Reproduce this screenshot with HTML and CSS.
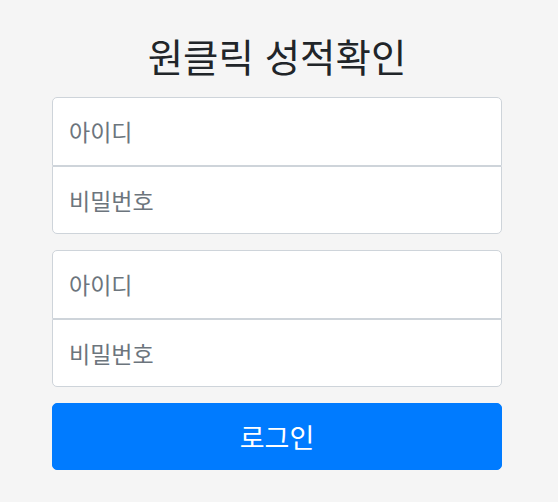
FILE: index.html
```html
<!DOCTYPE html>
<html lang="ko">
<head>
<meta charset="utf-8">
<title>원클릭 성적확인</title>
<link rel="stylesheet" href="styles.css">
</head>
<body>
<form class="signin">
  <h1 class="title">원클릭 성적확인</h1>
  <div class="group">
    <input class="field field-top" type="text" placeholder="아이디">
    <input class="field field-bottom" type="password" placeholder="비밀번호">
  </div>
  <div class="group">
    <input class="field field-top" type="text" placeholder="아이디">
    <input class="field field-bottom" type="password" placeholder="비밀번호">
  </div>
  <button class="submit" type="button">로그인</button>
</form>
</body>
</html>
```

FILE: styles.css
```css
html, body {
  margin: 0;
  padding: 0;
  background: #f5f5f5;
}
body {
  display: flex;
  justify-content: center;
  padding-right: 4px;
  font-family: "Noto Sans CJK KR", "Noto Sans", sans-serif;
  color: #212529;
}
.signin {
  width: 450px;
  display: flex;
  flex-direction: column;
  padding-top: 29px;
}
.title {
  margin: 0 0 16px;
  font-size: 38.5px;
  font-weight: 400;
  line-height: 52px;
  text-align: center;
  color: #212529;
}
.group {
  display: flex;
  flex-direction: column;
  margin-bottom: 16px;
}
.field {
  box-sizing: border-box;
  width: 100%;
  height: 68.5px;
  margin: 0;
  padding: 0 16px;
  border: 1px solid #ced4da;
  background: #fff;
  font-family: "Noto Sans CJK KR", "Noto Sans", sans-serif;
  font-size: 23px;
  color: #495057;
  outline: none;
}
.field::placeholder {
  color: #6c757d;
  opacity: 1;
}
.field-top {
  border-radius: 5px 5px 0 0;
}
.field-bottom {
  border-radius: 0 0 5px 5px;
}
.submit {
  box-sizing: border-box;
  width: 100%;
  height: 67px;
  border: 1px solid #007bff;
  border-radius: 5px;
  background: #007bff;
  color: #fff;
  font-family: "Noto Sans CJK KR", "Noto Sans", sans-serif;
  font-size: 27px;
  padding: 0;
  cursor: pointer;
}
```
